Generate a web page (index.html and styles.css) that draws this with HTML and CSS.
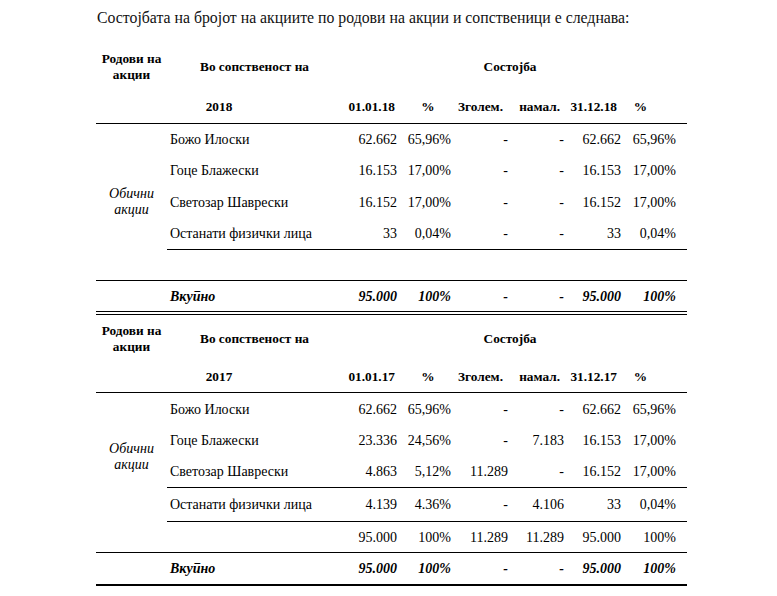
FILE: index.html
```html
<!DOCTYPE html>
<html lang="mk">
<head>
<meta charset="utf-8">
<link rel="stylesheet" href="styles.css">
</head>
<body>
<p class="title">Состојбата на бројот на акциите по родови на акции и сопственици е следнава:</p>

<table class="tbl t1">
  <colgroup><col class="w1"><col class="w2"><col class="w3"><col class="w4"><col class="w5"><col class="w6"><col class="w7"><col class="w8"></colgroup>
  <tr class="h1"><th class="kind">Родови на<br>акции</th><th class="own">Во сопственост на</th><th colspan="6" class="state">Состојба</th></tr>
  <tr class="h2"><th colspan="2" class="year">2018</th><th class="d1">01.01.18</th><th class="p1">%</th><th class="inc">Зголем.</th><th class="dec">намал.</th><th class="d2">31.12.18</th><th class="p2">%</th></tr>
  <tr class="r"><td rowspan="5" class="kind-cell">Обични<br>акции</td><td class="name">Божо Илоски</td><td>62.662</td><td>65,96%</td><td>-</td><td>-</td><td>62.662</td><td>65,96%</td></tr>
  <tr class="r"><td class="name">Гоце Блажески</td><td>16.153</td><td>17,00%</td><td>-</td><td>-</td><td>16.153</td><td>17,00%</td></tr>
  <tr class="r"><td class="name">Светозар Шаврески</td><td>16.152</td><td>17,00%</td><td>-</td><td>-</td><td>16.152</td><td>17,00%</td></tr>
  <tr class="r under"><td class="name">Останати физички лица</td><td>33</td><td>0,04%</td><td>-</td><td>-</td><td>33</td><td>0,04%</td></tr>
  <tr class="r"><td class="name"></td><td></td><td></td><td></td><td></td><td></td><td></td></tr>
  <tr class="r total"><td></td><td class="name">Вкупно</td><td>95.000</td><td>100%</td><td>-</td><td>-</td><td>95.000</td><td>100%</td></tr>
</table>

<table class="tbl t2">
  <colgroup><col class="w1"><col class="w2"><col class="w3"><col class="w4"><col class="w5"><col class="w6"><col class="w7"><col class="w8"></colgroup>
  <tr class="h1"><th class="kind">Родови на<br>акции</th><th class="own">Во сопственост на</th><th colspan="6" class="state">Состојба</th></tr>
  <tr class="h2"><th colspan="2" class="year">2017</th><th class="d1">01.01.17</th><th class="p1">%</th><th class="inc">Зголем.</th><th class="dec">намал.</th><th class="d2">31.12.17</th><th class="p2">%</th></tr>
  <tr class="r"><td rowspan="4" class="kind-cell">Обични<br>акции</td><td class="name">Божо Илоски</td><td>62.662</td><td>65,96%</td><td>-</td><td>-</td><td>62.662</td><td>65,96%</td></tr>
  <tr class="r"><td class="name">Гоце Блажески</td><td>23.336</td><td>24,56%</td><td>-</td><td>7.183</td><td>16.153</td><td>17,00%</td></tr>
  <tr class="r under"><td class="name">Светозар Шаврески</td><td>4.863</td><td>5,12%</td><td>11.289</td><td>-</td><td>16.152</td><td>17,00%</td></tr>
  <tr class="r under tall"><td class="name">Останати физички лица</td><td>4.139</td><td>4.36%</td><td>-</td><td>4.106</td><td>33</td><td>0,04%</td></tr>
  <tr class="r"><td></td><td class="name"></td><td>95.000</td><td>100%</td><td>11.289</td><td>11.289</td><td>95.000</td><td>100%</td></tr>
  <tr class="r total"><td></td><td class="name">Вкупно</td><td>95.000</td><td>100%</td><td>-</td><td>-</td><td>95.000</td><td>100%</td></tr>
</table>
</body>
</html>
```

FILE: styles.css
```css
html, body {
  margin: 0;
  padding: 0;
  background: #ffffff;
  color: #000000;
  font-family: "Liberation Serif", "Times New Roman", serif;
}

.title {
  margin: 0 0 15px 97px;
  padding-top: 9px;
  font-family: "Liberation Serif", "Times New Roman", serif;
  font-size: 15.8px;
  line-height: 18px;
  color: #111111;
}

.tbl {
  margin-left: 96px;
  width: 591px;
  border-collapse: collapse;
  table-layout: fixed;
  font-family: "Liberation Serif", "Times New Roman", serif;
}

.w1 { width: 71px; }
.w2 { width: 175px; }
.w3 { width: 59px; }
.w4 { width: 54px; }
.w5 { width: 57px; }
.w6 { width: 56px; }
.w7 { width: 57px; }
.w8 { width: 62px; }

th {
  font-family: "Liberation Serif", "Times New Roman", serif;
  font-size: 13.3px;
  font-weight: bold;
  padding: 0;
  white-space: nowrap;
  line-height: 16px;
}

.h1 { height: 50px; }
.t2 .h1 { height: 48px; }
.h2 { height: 31px; }
.t2 .h2 { height: 30px; }

.h1 th { text-align: center; vertical-align: middle; }
.h1 .state { padding-right: 9px; }

.h2 th {
  border-bottom: 1px solid #000;
  text-align: right;
  vertical-align: middle;
}
.h2 .year { text-align: center; }
.h2 .d1 { padding-right: 6px; }
.h2 .p1 { text-align: center; }
.h2 .inc { padding-right: 9px; }
.h2 .dec { padding-right: 8px; }
.h2 .d2 { padding-right: 8px; }
.h2 .p2 { padding-right: 40px; }

td {
  font-family: "Liberation Serif", "Times New Roman", serif;
  font-size: 14px;
  line-height: 16px;
  padding: 2px 4px 0 0;
  text-align: right;
  vertical-align: middle;
  white-space: nowrap;
}

td:last-child { padding-right: 11px; }

.r { height: 31.6px; }
.r.tall { height: 34px; }

td.name {
  text-align: left;
  padding-left: 3px;
}

td.kind-cell {
  text-align: center;
  font-style: italic;
  padding: 0;
}

.under td { border-bottom: 1px solid #000; }

.total td {
  border-top: 1px solid #000;
  font-weight: bold;
  font-style: italic;
}

.t1 .total td { border-bottom: 4px double #000; }
.t2 .total td { border-bottom: 2px solid #000; }
```
